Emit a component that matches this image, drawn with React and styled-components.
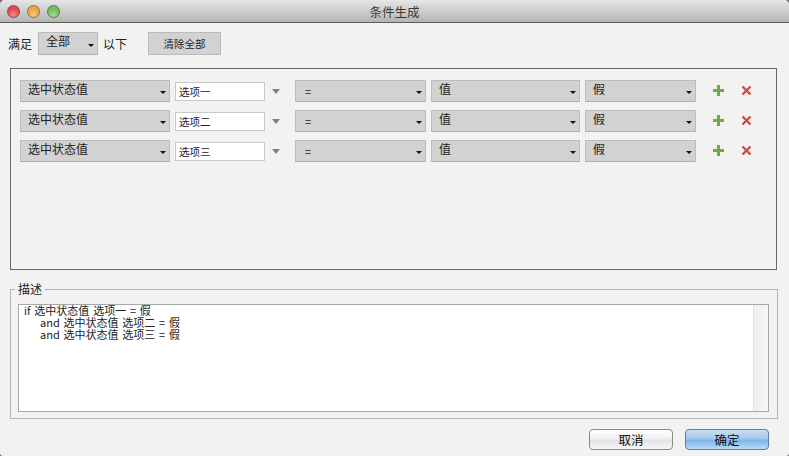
import React from "react";
import styled, { createGlobalStyle } from "styled-components";

const rows = ["选项一", "选项二", "选项三"];

const App = () => {
  return (
    <>
      <GlobalStyle />
      <Win>
        <TitleBar>
          <Lights>
            <Light $color="#e8474c" />
            <Light $color="#eda63f" />
            <Light $color="#72c05a" />
          </Lights>
          <Title>条件生成</Title>
        </TitleBar>
        <TopBar>
          <Lead>满足</Lead>
          <Select $width={60} $height={23}>
            <SelectText>全部</SelectText>
            <Caret />
          </Select>
          <span>以下</span>
          <ClearButton>清除全部</ClearButton>
        </TopBar>
        <Panel>
          {rows.map((name) => (
            <Row key={name}>
              <Select $width={150}>
                <SelectText>选中状态值</SelectText>
                <Caret />
              </Select>
              <NameBox>
                <span>{name}</span>
              </NameBox>
              <GreyCaret />
              <Select $width={131}>
                <SelectText $center>=</SelectText>
                <Caret />
              </Select>
              <Select $width={149}>
                <SelectText>值</SelectText>
                <Caret />
              </Select>
              <Select $width={111}>
                <SelectText>假</SelectText>
                <Caret />
              </Select>
              <Actions>
                <svg width="11" height="11" viewBox="0 0 11 11">
                  <path d="M4 0h3v4h4v3H7v4H4V7H0V4h4z" fill="#72ab3c" />
                </svg>
                <svg width="11" height="11" viewBox="0 0 11 11">
                  <path d="M1.5 1.5l8 8M9.5 1.5l-8 8" stroke="#e4423c" strokeWidth="2.4" fill="none" />
                </svg>
              </Actions>
            </Row>
          ))}
        </Panel>
        <Group>
          <Legend>描述</Legend>
          <TextBox>
            <TextLines>
              <div>if 选中状态值 选项一 = 假</div>
              <Indented>and 选中状态值 选项二 = 假</Indented>
              <Indented>and 选中状态值 选项三 = 假</Indented>
            </TextLines>
            <ScrollTrack />
          </TextBox>
        </Group>
        <Footer>
          <DialogButton>取消</DialogButton>
          <DialogButton $primary>确定</DialogButton>
        </Footer>
      </Win>
    </>
  );
};

export default App;

const GlobalStyle = createGlobalStyle`
  html, body {
    margin: 0;
    padding: 0;
    background: #6a6a6a;
  }
`;

const Win = styled.div`
  width: 789px;
  height: 456px;
  overflow: hidden;
  display: flex;
  flex-direction: column;
  background: #f2f2f2;
  border-radius: 5px 5px 3px 3px;
  font-family: "Noto Sans CJK SC", "Liberation Sans", sans-serif;
  font-size: 12px;
  color: #222;
`;

const TitleBar = styled.div`
  height: 23px;
  box-sizing: border-box;
  flex-shrink: 0;
  display: grid;
  grid-template-columns: 1fr auto 1fr;
  align-items: center;
  background: linear-gradient(#e6e6e6, #b4b4b4);
  border-bottom: 1px solid #5c5c5c;
`;

const Lights = styled.div`
  display: flex;
  gap: 7px;
  padding-left: 7px;
`;

const Light = styled.span`
  width: 13px;
  height: 13px;
  border-radius: 50%;
  border: 1px solid rgba(70, 70, 70, 0.55);
  box-sizing: border-box;
  background: radial-gradient(circle at 50% 80%, #fff6 0, transparent 55%), ${(p) => p.$color};
`;

const Title = styled.div`
  grid-column: 2;
  font-size: 12.5px;
  color: #3a3a3a;
`;

const TopBar = styled.div`
  display: flex;
  align-items: center;
  height: 23px;
  margin-top: 9px;
  padding-left: 8px;
  gap: 5px;
  font-size: 12px;
`;

const Lead = styled.span`
  margin-right: 1px;
`;

const Select = styled.div`
  width: ${(p) => p.$width}px;
  height: ${(p) => p.$height || 22}px;
  box-sizing: border-box;
  flex-shrink: 0;
  display: flex;
  justify-content: space-between;
  background: #d2d2d2;
  border: 1px solid #bcbcbc;
  border-bottom-color: #b0b0b0;
  padding: 0 3px 0 7px;
`;

const SelectText = styled.span`
  font-size: 12px;
  line-height: 15px;
  color: #222;
  ${(p) => p.$center && "line-height: 20px; padding-left: 2px; font-size: 11px;"}
`;

const Caret = styled.span`
  align-self: flex-end;
  width: 0;
  height: 0;
  margin-bottom: 7px;
  border-left: 3.5px solid transparent;
  border-right: 3.5px solid transparent;
  border-top: 3.5px solid #111;
`;

const GreyCaret = styled.span`
  width: 0;
  height: 0;
  flex-shrink: 0;
  margin: 0 10px 0 2px;
  border-left: 4px solid transparent;
  border-right: 4px solid transparent;
  border-top: 5px solid #808080;
`;

const ClearButton = styled.div`
  width: 73px;
  height: 23px;
  box-sizing: border-box;
  margin-left: 16px;
  display: flex;
  align-items: center;
  justify-content: center;
  background: #d2d2d2;
  border: 1px solid #bcbcbc;
  font-size: 10.5px;
`;

const Panel = styled.div`
  height: 202px;
  box-sizing: border-box;
  margin: 13px 12px 0 10px;
  border: 1px solid #666;
  padding: 11px 9px 0;
  display: flex;
  flex-direction: column;
  gap: 8px;
`;

const Row = styled.div`
  display: flex;
  align-items: center;
  gap: 5px;
  height: 22px;
`;

const NameBox = styled.div`
  width: 90px;
  height: 19px;
  box-sizing: border-box;
  margin-top: 1px;
  flex-shrink: 0;
  display: flex;
  align-items: center;
  padding-left: 3px;
  background: #fff;
  border: 1px solid #c8c8c8;
  font-size: 10.5px;
`;

const Actions = styled.div`
  display: flex;
  align-items: center;
  gap: 17px;
  padding: 0 0 2px 12px;
`;

const Group = styled.fieldset`
  height: 137px;
  box-sizing: border-box;
  margin: 12px 11px 0 10px;
  padding: 8px 8px 6px 7px;
  border: 1px solid #b4b4b4;
  display: flex;
  min-inline-size: auto;
`;

const Legend = styled.legend`
  padding: 0 3px;
  margin-left: -3px;
  font-size: 12px;
  line-height: 14px;
  color: #222;
`;

const TextBox = styled.div`
  flex: 1;
  height: 108px;
  box-sizing: border-box;
  display: flex;
  background: #fff;
  border: 1px solid #a8a8a8;
`;

const TextLines = styled.div`
  flex: 1;
  margin-top: -1px;
  padding: 0 5px;
  font-size: 11px;
  line-height: 12px;
  word-spacing: 1.3px;
`;

const Indented = styled.div`
  padding-left: 16px;
`;

const ScrollTrack = styled.div`
  width: 14px;
  background: linear-gradient(90deg, #eeeeee, #f8f8f8);
  border-left: 1px solid #e2e2e2;
`;

const Footer = styled.div`
  display: flex;
  justify-content: flex-end;
  gap: 12px;
  margin-top: 10px;
  padding-right: 20px;
`;

const DialogButton = styled.div`
  width: 84px;
  height: 21px;
  box-sizing: border-box;
  display: flex;
  align-items: center;
  justify-content: center;
  border-radius: 4px;
  font-size: 12.5px;
  color: #111;
  border: 1px solid ${(p) => (p.$primary ? "#5d7ea6" : "#8a8a8a")};
  background: ${(p) =>
    p.$primary
      ? "linear-gradient(#c9def3 0%, #a5c8ec 45%, #7db4ea 55%, #b7dcf8 100%)"
      : "linear-gradient(#ffffff 0%, #f0f0f0 45%, #e2e2e2 55%, #f8f8f8 100%)"};
`;
